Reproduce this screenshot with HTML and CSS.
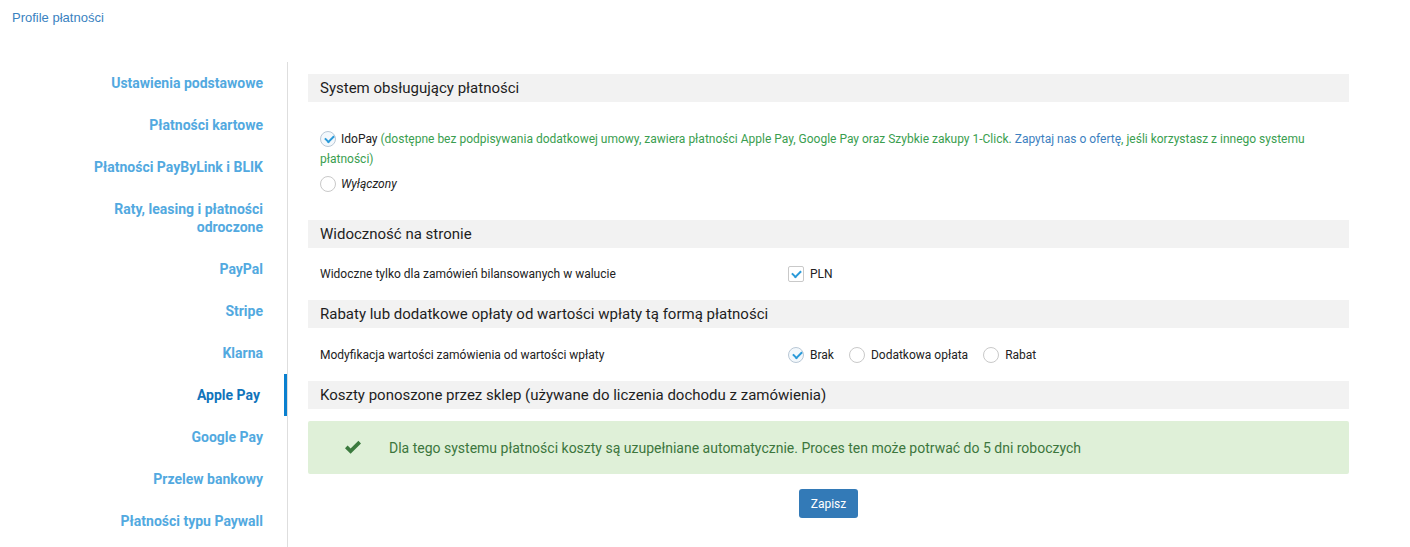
FILE: index.html
```html
<!DOCTYPE html>
<html lang="pl">
  <head>
    <meta charset="UTF-8" />
    <meta name="viewport" content="width=device-width, initial-scale=1.0" />
    <title>Profile płatności - Apple Pay</title>
    <link rel="stylesheet" href="styles.css">
  </head>
  <body>

    <div class="page-title">
      <a href="#">Profile płatności</a>
    </div>

    <div class="layout">
      <!-- Menu boczne -->
      <nav class="side-menu">
        <ul>
          <li><a href="#">Ustawienia podstawowe</a></li>
          <li><a href="#">Płatności kartowe</a></li>
          <li><a href="#">Płatności PayByLink i BLIK</a></li>
          <li><a href="#">Raty, leasing i płatności<br>odroczone</a></li>
          <li><a href="#">PayPal</a></li>
          <li><a href="#">Stripe</a></li>
          <li><a href="#">Klarna</a></li>
          <li class="active"><a href="#">Apple Pay</a></li>
          <li><a href="#">Google Pay</a></li>
          <li><a href="#">Przelew bankowy</a></li>
          <li><a href="#">Płatności typu Paywall</a></li>
        </ul>
      </nav>

      <main class="settings">
        <h3 class="section-header">System obsługujący płatności</h3>
        <div class="options">
          <p class="option note"><span class="radio checked"></span><span class="option-name">IdoPay</span> (dostępne bez podpisywania dodatkowej umowy, zawiera płatności Apple Pay, Google Pay oraz Szybkie zakupy 1-Click. <a href="#">Zapytaj nas o ofertę</a>, jeśli korzystasz z innego systemu płatności)</p>
          <p class="option"><span class="radio"></span><em class="option-name">Wyłączony</em></p>
        </div>

        <h3 class="section-header">Widoczność na stronie</h3>
        <div class="setting-row">
          <div class="setting-label">Widoczne tylko dla zamówień bilansowanych w walucie</div>
          <div class="setting-value">
            <label class="choice"><span class="checkbox checked"></span>PLN</label>
          </div>
        </div>

        <h3 class="section-header">Rabaty lub dodatkowe opłaty od wartości wpłaty tą formą płatności</h3>
        <div class="setting-row tall">
          <div class="setting-label">Modyfikacja wartości zamówienia od wartości wpłaty</div>
          <div class="setting-value">
            <label class="choice"><span class="radio checked"></span>Brak</label>
            <label class="choice"><span class="radio"></span>Dodatkowa opłata</label>
            <label class="choice"><span class="radio"></span>Rabat</label>
          </div>
        </div>

        <h3 class="section-header">Koszty ponoszone przez sklep (używane do liczenia dochodu z zamówienia)</h3>
        <div class="alert-success">
          <svg class="alert-icon" width="18" height="15" viewBox="0 0 18 15">
            <path d="M1 8.2 L3.6 5.6 L6.6 8.6 L14.4 0.8 L17 3.4 L6.6 13.8 Z" fill="#3b7a3e"/>
          </svg>
          <span>Dla tego systemu płatności koszty są uzupełniane automatycznie. Proces ten może potrwać do 5 dni roboczych</span>
        </div>

        <div class="form-actions">
          <button class="save-button">Zapisz</button>
        </div>
      </main>
    </div>

  </body>
</html>
```

FILE: styles.css
```css
/* Reset */
* {
  margin: 0;
  padding: 0;
  box-sizing: border-box;
}

body {
  font-family: Roboto, "Noto Sans", sans-serif;
  color: #222;
  background: #fff;
}

a {
  text-decoration: none;
  color: inherit;
}

/* Tytuł strony */
.page-title {
  padding: 10px 12px;
  height: 62px;
  font-family: "Liberation Sans", Arial, sans-serif;
  font-size: 13px;
  line-height: 16px;
}

.page-title a {
  color: #3a82bf;
}

.layout {
  display: flex;
  align-items: stretch;
  min-height: 485px;
}

/* Menu boczne */
.side-menu {
  width: 288px;
  flex-shrink: 0;
  border-right: 1px solid #dedede;
}

.side-menu ul {
  list-style: none;
}

.side-menu li {
  position: relative;
  text-align: right;
  padding: 12px 24px 12px 0;
  font-size: 14px;
  font-weight: 700;
  line-height: 18px;
}

.side-menu li a {
  color: #52a9e0;
}

.side-menu li.active {
  padding-right: 27px;
}

.side-menu li.active a {
  color: #1174bb;
}

.side-menu li.active::after {
  content: "";
  position: absolute;
  top: 0;
  bottom: 0;
  right: 0;
  width: 3px;
  background: #0a80cf;
}

/* Ustawienia */
.settings {
  flex: 1;
  margin: 0 61px 0 20px;
  padding-top: 12px;
}

.section-header {
  background: #f2f2f2;
  height: 28px;
  line-height: 28px;
  padding: 0 12px;
  font-size: 15px;
  font-weight: 400;
  color: #1e1e1e;
}

.options {
  padding: 27px 12px 26px;
  font-size: 12px;
  line-height: 20px;
}

.option + .option {
  margin-top: 5px;
}

.option .radio {
  margin-right: 5px;
}

.option-name {
  color: #222;
}

.note {
  color: #3a9e4f;
}

.note a {
  color: #3d7fc0;
}

.setting-row {
  display: flex;
  align-items: center;
  height: 52px;
  padding: 0 12px;
  font-size: 12px;
}

.setting-row.tall {
  height: 53px;
}

.setting-label {
  width: 468px;
}

.setting-value {
  display: flex;
  align-items: center;
  gap: 15px;
}

.choice {
  display: flex;
  align-items: center;
  gap: 6px;
}

/* Kontrolki */
.radio,
.checkbox {
  display: inline-block;
  width: 16px;
  height: 16px;
  border: 1px solid #c9c9c9;
  background: #fff;
  vertical-align: -4px;
  position: relative;
}

.radio {
  border-radius: 50%;
}

.checkbox {
  border-radius: 2px;
}

.radio.checked {
  background: #f3f8fc;
  border-color: #b9c8d6;
}

.radio.checked::after,
.checkbox.checked::after {
  content: "";
  position: absolute;
  left: 4px;
  top: 3px;
  width: 7px;
  height: 4px;
  border-left: 2px solid #2a9ad9;
  border-bottom: 2px solid #2a9ad9;
  transform: rotate(-45deg);
}

.checkbox.checked::after {
  left: 3px;
}

/* Komunikat */
.alert-success {
  display: flex;
  align-items: center;
  margin-top: 12px;
  height: 53px;
  padding-left: 36px;
  background: #dff0d8;
  border-radius: 2px;
  color: #3c763d;
  font-size: 14px;
}

.alert-icon {
  margin-right: 27px;
}

.form-actions {
  text-align: center;
  margin-top: 15px;
}

.save-button {
  background: #337ab7;
  color: #fff;
  border: none;
  border-radius: 3px;
  height: 29px;
  padding: 0 12px;
  font-family: Roboto, sans-serif;
  font-size: 12px;
  cursor: pointer;
}
```
